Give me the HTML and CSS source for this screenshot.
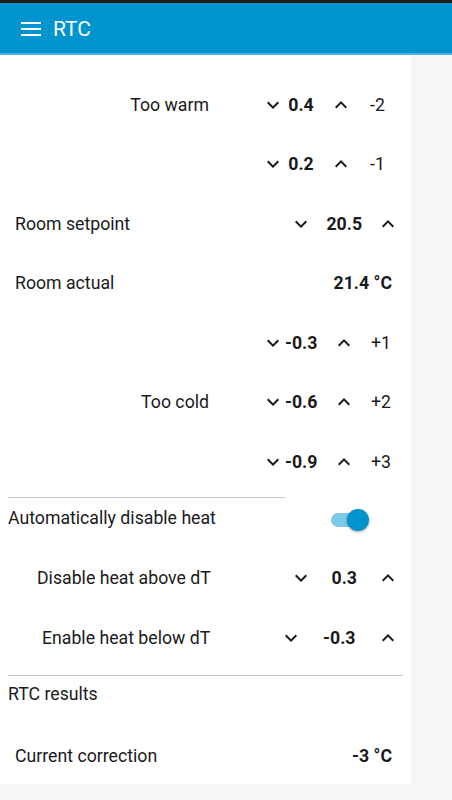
FILE: index.html
```html
<!DOCTYPE html>
<html>
<head>
<meta charset="utf-8">
<link rel="stylesheet" href="styles.css">
</head>
<body>
<div class="statusbar"></div>
<header class="appbar">
  <svg class="menu" width="20" height="14" viewBox="0 0 20 14"><rect x="0" y="0" width="20" height="2" fill="#fff"/><rect x="0" y="6" width="20" height="2" fill="#fff"/><rect x="0" y="12" width="20" height="2" fill="#fff"/></svg>
  <span class="title">RTC</span>
</header>
<main class="panel">
  <div class="thresholds">
    <div class="trow"><span class="lbl">Too warm</span><svg class="ic" viewBox="0 0 24 24"><path d="M16.59 8.59L12 13.17 7.41 8.59 6 10l6 6 6-6z"/></svg><span class="val">0.4</span><svg class="ic up" viewBox="0 0 24 24"><path d="M12 8l-6 6 1.41 1.41L12 10.83l4.59 4.58L18 14z"/></svg><span class="off">-2</span></div>
    <div class="trow"><span class="lbl"></span><svg class="ic" viewBox="0 0 24 24"><path d="M16.59 8.59L12 13.17 7.41 8.59 6 10l6 6 6-6z"/></svg><span class="val">0.2</span><svg class="ic up" viewBox="0 0 24 24"><path d="M12 8l-6 6 1.41 1.41L12 10.83l4.59 4.58L18 14z"/></svg><span class="off">-1</span></div>
    <div class="srow"><span class="slbl">Room setpoint</span><svg class="ic" viewBox="0 0 24 24"><path d="M16.59 8.59L12 13.17 7.41 8.59 6 10l6 6 6-6z"/></svg><span class="sval">20.5</span><svg class="ic" viewBox="0 0 24 24"><path d="M12 8l-6 6 1.41 1.41L12 10.83l4.59 4.58L18 14z"/></svg></div>
    <div class="vrow"><span class="slbl">Room actual</span><span class="bold">21.4 °C</span></div>
    <div class="trow"><span class="lbl"></span><svg class="ic" viewBox="0 0 24 24"><path d="M16.59 8.59L12 13.17 7.41 8.59 6 10l6 6 6-6z"/></svg><span class="val">-0.3</span><svg class="ic up wide-up" viewBox="0 0 24 24"><path d="M12 8l-6 6 1.41 1.41L12 10.83l4.59 4.58L18 14z"/></svg><span class="off off-narrow">+1</span></div>
    <div class="trow"><span class="lbl">Too cold</span><svg class="ic" viewBox="0 0 24 24"><path d="M16.59 8.59L12 13.17 7.41 8.59 6 10l6 6 6-6z"/></svg><span class="val">-0.6</span><svg class="ic up wide-up" viewBox="0 0 24 24"><path d="M12 8l-6 6 1.41 1.41L12 10.83l4.59 4.58L18 14z"/></svg><span class="off off-narrow">+2</span></div>
    <div class="trow"><span class="lbl"></span><svg class="ic" viewBox="0 0 24 24"><path d="M16.59 8.59L12 13.17 7.41 8.59 6 10l6 6 6-6z"/></svg><span class="val">-0.9</span><svg class="ic up wide-up" viewBox="0 0 24 24"><path d="M12 8l-6 6 1.41 1.41L12 10.83l4.59 4.58L18 14z"/></svg><span class="off off-narrow">+3</span></div>
  </div>
  <hr class="sep short">
  <div class="autorow"><span class="autolbl">Automatically disable heat</span><span class="toggle"><span class="track"></span><span class="thumb"></span></span></div>
  <div class="srow dtrow"><span class="slbl above">Disable heat above dT</span><svg class="ic" viewBox="0 0 24 24"><path d="M16.59 8.59L12 13.17 7.41 8.59 6 10l6 6 6-6z"/></svg><span class="sval">0.3</span><svg class="ic" viewBox="0 0 24 24"><path d="M12 8l-6 6 1.41 1.41L12 10.83l4.59 4.58L18 14z"/></svg></div>
  <div class="srow"><span class="slbl below">Enable heat below dT</span><svg class="ic" viewBox="0 0 24 24"><path d="M16.59 8.59L12 13.17 7.41 8.59 6 10l6 6 6-6z"/></svg><span class="sval wide">-0.3</span><svg class="ic" viewBox="0 0 24 24"><path d="M12 8l-6 6 1.41 1.41L12 10.83l4.59 4.58L18 14z"/></svg></div>
  <hr class="sep long">
  <div class="results">RTC results</div>
  <div class="vrow last"><span class="slbl">Current correction</span><span class="bold">-3 °C</span></div>
</main>
</body>
</html>
```
FILE: styles.css
```css
html, body {
  margin: 0;
  padding: 0;
}
body {
  background: #f6f6f6;
  font-family: Roboto, "Noto Sans", sans-serif;
  font-size: 17.7px;
  color: #1a1a1a;
  width: 452px;
  height: 800px;
  overflow: hidden;
}
.statusbar {
  height: 3px;
  background: #1e1e1e;
}
.appbar {
  background: #0094cf;
  border-bottom: 2px solid #49b1e1;
  display: flex;
  align-items: center;
  padding-top: 2px;
  box-sizing: border-box;
  height: 52px;
}
.menu {
  margin-left: 21px;
  display: block;
}
.title {
  color: #fff;
  font-size: 21px;
  margin-left: 12px;
}
.panel {
  width: 411px;
  height: 729px;
  background: #fff;
  padding-top: 20px;
  box-sizing: border-box;
  display: flex;
  flex-direction: column;
}
.ic {
  width: 24px;
  height: 24px;
  flex: none;
  display: block;
  fill: #1a1a1a;
}
.trow {
  display: flex;
  align-items: center;
  height: 59.5px;
}
.trow .lbl {
  width: 209px;
  text-align: right;
  margin-right: 52px;
}
.trow .val {
  width: 32px;
  text-align: center;
  font-weight: 700;
}
.trow .up {
  margin-left: 12px;
}
.trow .up.wide-up {
  margin-left: 15px;
}
.trow .off {
  margin-left: 17px;
}
.trow .off.off-narrow {
  margin-left: 15px;
}
.srow {
  display: flex;
  align-items: center;
  height: 59.5px;
  padding: 0 11px 0 15px;
}
.slbl {
  flex: 1;
}
.sval {
  width: 63.5px;
  text-align: center;
  font-weight: 700;
}
.sval.wide {
  width: 73.5px;
}
.vrow {
  display: flex;
  align-items: center;
  justify-content: space-between;
  height: 59.5px;
  padding: 0 19px 0 15px;
}
.bold {
  font-weight: 700;
}
.sep {
  border: 0;
  border-top: 1px solid #c4c4c4;
  margin: 5px 0 0 8px;
  height: 0;
}
.sep.short {
  width: 277px;
}
.sep.long {
  width: 395px;
  margin-top: 7px;
}
.autorow {
  display: flex;
  align-items: center;
  height: 40px;
  padding-left: 8px;
}
.autolbl {
  width: 323px;
}
.toggle {
  position: relative;
  width: 38px;
  height: 22px;
  margin-top: 4px;
  flex: none;
}
.track {
  position: absolute;
  left: 0;
  top: 4px;
  width: 34px;
  height: 14px;
  border-radius: 7px;
  background: #80c9e8;
}
.thumb {
  position: absolute;
  left: 16px;
  top: 0;
  width: 22px;
  height: 22px;
  border-radius: 50%;
  background: #0094cf;
  box-shadow: 0 1px 3px rgba(0,0,0,0.35);
}
.dtrow {
  margin-top: 11px;
}
.above {
  padding-left: 22px;
}
.below {
  padding-left: 27px;
}
.results {
  height: 36px;
  display: flex;
  align-items: center;
  padding-left: 8px;
  margin-bottom: 17px;
}
.vrow.last {
  height: 54px;
}
```
